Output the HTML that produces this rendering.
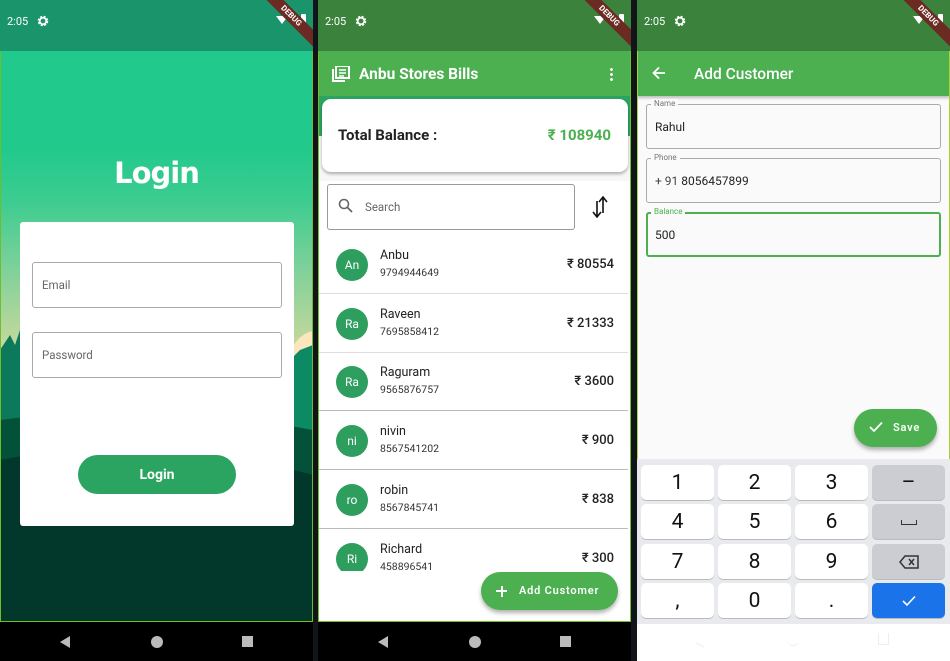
<!DOCTYPE html><html><head><meta charset="utf-8"><style>
*{margin:0;padding:0;box-sizing:border-box}
body{width:950px;height:661px;background:#111418;position:relative;overflow:hidden;font-family:"Roboto","Liberation Sans",sans-serif}
.p{position:absolute;top:0;height:661px;overflow:hidden}
.a{position:absolute}
.sb{position:absolute;left:0;top:0;width:100%;height:51px;color:#fff;font-size:11px}
.sb .t{position:absolute;left:7px;top:15px}
.gear{position:absolute;left:37px;top:15px}
.ribbon{position:absolute;right:-18px;top:10px;width:80px;height:12px;background:#6b2a22;transform:rotate(45deg);color:#fff;font-size:8px;text-align:center;line-height:12px;font-weight:bold}
.wifi{position:absolute;right:25px;top:16px;width:0;height:0;border-left:6px solid transparent;border-right:6px solid transparent;border-top:8px solid #fff}
.bat{position:absolute;right:7px;top:14px;width:5px;height:11px;background:#fff;border-radius:1px}
.nav{position:absolute;left:0;top:622px;width:100%;height:39px;background:#000}
.tri{position:absolute;top:14px;width:0;height:0;border-top:6px solid transparent;border-bottom:6px solid transparent;border-right:10px solid #bbb}
.cir{position:absolute;top:14px;width:12px;height:12px;border-radius:50%;background:#bbb}
.sq{position:absolute;top:14px;width:11px;height:11px;background:#bbb}
.row{position:absolute;left:0;width:310px;height:59px;border-bottom:1px solid #ddd}
.av{position:absolute;left:18px;top:14px;width:32px;height:32px;border-radius:50%;background:#2e9e5f;color:#fff;font-size:12px;text-align:center;line-height:32px}
.nm{position:absolute;left:62px;top:13px;font-size:12.5px;color:#222}
.ph{position:absolute;left:62px;top:31px;font-size:10.5px;color:#333}
.am{position:absolute;right:14px;top:22px;font-size:13px;color:#222;font-weight:500}
.k{position:absolute;width:73px;height:35px;background:#fff;border-radius:5px;box-shadow:0 1px 0 #bbb;font-size:21px;text-align:center;line-height:37px;color:#111}
.k.g{background:#cbcdd2}
</style></head><body>

<!-- PANEL 1 -->
<div class="p" style="left:0;width:313px;background:linear-gradient(#20c98c 0,#22c98c 150px,#3ccc90 200px,#7fd19a 270px,#b7d79b 330px,#d9dca0 380px)">
 <div class="sb" style="background:#1a956b"><span class="t">2:05</span><svg class="gear" width="12" height="12"><circle cx="6" cy="6" r="4" fill="none" stroke="#fff" stroke-width="2.5" stroke-dasharray="2 1.2"/><circle cx="6" cy="6" r="3.2" fill="none" stroke="#fff" stroke-width="1.6"/></svg><div class="wifi"></div><div class="bat"></div><div class="ribbon">DEBUG</div></div>
 <div class="a" style="left:290px;top:330px;width:60px;height:60px;border-radius:50%;background:#fbe6bd"></div>
 <svg class="a" style="left:0;top:330px" width="313" height="292"><path d="M0 20 L10 5 L15 15 L20 0 L28 25 L35 15 L45 40 L45 292 L0 292Z" fill="#0c7a5a"/><path d="M270 70 L280 50 L290 30 L300 20 L313 15 L313 292 L270 292Z" fill="#0c8a63"/><path d="M0 90 Q150 70 313 100 L313 292 L0 292Z" fill="#045139"/><path d="M0 130 Q150 100 313 145 L313 292 L0 292Z" fill="#02382b"/></svg>
 <div class="a" style="left:0;top:156px;width:313px;text-align:center;color:#fff;font-size:29px;font-weight:900;font-family:'DejaVu Sans',sans-serif;letter-spacing:-1px">Login</div>
 <div class="a" style="left:20px;top:222px;width:274px;height:304px;background:#fff;border-radius:3px"></div>
 <div class="a" style="left:32px;top:262px;width:250px;height:46px;border:1px solid #aaa;border-radius:3px;font-size:11.5px;color:#666;padding:15px 9px">Email</div>
 <div class="a" style="left:32px;top:332px;width:250px;height:46px;border:1px solid #aaa;border-radius:3px;font-size:11.5px;color:#666;padding:15px 9px">Password</div>
 <div class="a" style="left:78px;top:455px;width:158px;height:39px;border-radius:20px;background:#2ca461;color:#fff;font-size:14px;font-weight:bold;text-align:center;line-height:40px">Login</div>
 <div class="a" style="left:0;top:51px;width:313px;height:571px;border:1px solid #6fbf2a;border-top:none"></div>
 <div class="nav"><div class="tri" style="left:60px"></div><div class="cir" style="left:151px"></div><div class="sq" style="left:242px"></div></div>
</div>

<!-- PANEL 2 -->
<div class="p" style="left:318px;width:313px;background:#fff">
 <div class="sb" style="background:#3b823d"><span class="t">2:05</span><svg class="gear" width="12" height="12"><circle cx="6" cy="6" r="4" fill="none" stroke="#fff" stroke-width="2.5" stroke-dasharray="2 1.2"/><circle cx="6" cy="6" r="3.2" fill="none" stroke="#fff" stroke-width="1.6"/></svg><div class="wifi"></div><div class="bat"></div><div class="ribbon">DEBUG</div></div>
 <div class="a" style="left:0;top:51px;width:313px;height:45px;background:#4caf50"></div>
 <svg class="a" style="left:14px;top:66px" width="18" height="16"><rect x="4" y="0" width="13" height="12" fill="none" stroke="#fff" stroke-width="2"/><path d="M1 3 V15 H13" fill="none" stroke="#fff" stroke-width="2"/><path d="M7 4h7M7 7h7M7 10h5" stroke="#fff" stroke-width="1.5"/></svg>
 <div class="a" style="left:41px;top:65px;color:#fff;font-size:15.5px;font-weight:bold">Anbu Stores Bills</div>
 <div class="a" style="left:292px;top:67px;width:3px;height:14px;background:radial-gradient(circle,#fff 1.3px,transparent 1.6px) 0 0/3px 5px"></div>
 <div class="a" style="left:0;top:96px;width:313px;height:40px;background:#2ca461"></div>
 <div class="a" style="left:0;top:136px;width:313px;height:45px;background:#f7f7f7"></div>
 <div class="a" style="left:4px;top:99px;width:306px;height:73px;background:#fff;border-radius:9px;box-shadow:0 2px 3px rgba(0,0,0,.3)"></div>
 <div class="a" style="left:20px;top:126px;font-size:15px;font-weight:bold;color:#222">Total Balance :</div>
 <div class="a" style="right:20px;top:126px;font-size:15px;font-weight:bold;color:#4caf50">₹ 108940</div>
 <div class="a" style="left:9px;top:184px;width:248px;height:46px;border:1px solid #999;border-radius:3px"></div>
 <svg class="a" style="left:20px;top:198px" width="16" height="16"><circle cx="6" cy="6" r="4.5" fill="none" stroke="#666" stroke-width="1.6"/><path d="M9.5 9.5 L14 14" stroke="#666" stroke-width="1.8"/></svg>
 <div class="a" style="left:47px;top:200px;font-size:11.5px;color:#666">Search</div>
 <svg class="a" style="left:274px;top:196px" width="16" height="22"><path d="M5 21 V5 M1 16 L5 21 L9 16 M11 1 V17 M7 6 L11 1 L15 6" fill="none" stroke="#111" stroke-width="1.6"/></svg>
 <div class="row" style="top:235px"><div class="av">An</div><div class="nm">Anbu</div><div class="ph">9794944649</div><div class="am">₹ 80554</div></div>
 <div class="row" style="top:294px"><div class="av">Ra</div><div class="nm">Raveen</div><div class="ph">7695858412</div><div class="am">₹ 21333</div></div>
 <div class="row" style="top:352px;border-color:#bbb"><div class="av">Ra</div><div class="nm">Raguram</div><div class="ph">9565876757</div><div class="am">₹ 3600</div></div>
 <div class="row" style="top:411px;border-color:#bbb"><div class="av">ni</div><div class="nm">nivin</div><div class="ph">8567541202</div><div class="am">₹ 900</div></div>
 <div class="row" style="top:470px;border-color:#bbb"><div class="av">ro</div><div class="nm">robin</div><div class="ph">8567845741</div><div class="am">₹ 838</div></div>
 <div class="a" style="left:0;top:529px;width:310px;height:42px;overflow:hidden"><div class="av" style="top:14px">Ri</div><div class="nm" style="top:13px">Richard</div><div class="ph">458896541</div><div class="am">₹ 300</div></div>
 <div class="a" style="left:163px;top:572px;width:137px;height:38px;border-radius:19px;background:#4caf50;box-shadow:0 3px 4px rgba(0,0,0,.3);color:#fff;font-size:11px;font-weight:600;letter-spacing:.8px;line-height:38px;padding-left:38px">Add Customer</div>
 <div class="a" style="left:178px;top:590px;width:11px;height:2px;background:#fff"></div><div class="a" style="left:182.5px;top:585.5px;width:2px;height:11px;background:#fff"></div>
 <div class="a" style="left:0;top:51px;width:313px;height:571px;border:1px solid #6fbf2a;border-top:none"></div>
 <div class="nav"><div class="tri" style="left:60px"></div><div class="cir" style="left:151px"></div><div class="sq" style="left:242px"></div></div>
</div>

<!-- PANEL 3 -->
<div class="p" style="left:637px;width:313px;background:#fafafa">
 <div class="sb" style="background:#3b823d"><span class="t">2:05</span><svg class="gear" width="12" height="12"><circle cx="6" cy="6" r="4" fill="none" stroke="#fff" stroke-width="2.5" stroke-dasharray="2 1.2"/><circle cx="6" cy="6" r="3.2" fill="none" stroke="#fff" stroke-width="1.6"/></svg><div class="wifi"></div><div class="bat"></div><div class="ribbon">DEBUG</div></div>
 <div class="a" style="left:0;top:51px;width:313px;height:45px;background:#4caf50;box-shadow:0 2px 3px rgba(0,0,0,.25)"></div>
 <svg class="a" style="left:15px;top:66px" width="14" height="14"><path d="M13 7 H2 M7 1.5 L1.5 7 L7 12.5" fill="none" stroke="#fff" stroke-width="1.8"/></svg>
 <div class="a" style="left:57px;top:65px;color:#fff;font-size:15.5px;font-weight:500">Add Customer</div>
 <div class="a" style="left:9px;top:104px;width:295px;height:45px;border:1px solid #aaa;border-radius:3px"></div>
 <div class="a" style="left:14px;top:99px;font-size:8px;color:#777;background:#fafafa;padding:0 3px">Name</div>
 <div class="a" style="left:18px;top:120px;font-size:12px;color:#222">Rahul</div>
 <div class="a" style="left:9px;top:158px;width:295px;height:45px;border:1px solid #aaa;border-radius:3px"></div>
 <div class="a" style="left:14px;top:153px;font-size:8px;color:#777;background:#fafafa;padding:0 3px">Phone</div>
 <div class="a" style="left:18px;top:174px;font-size:12px;color:#444">+ 91 <span style="color:#222">8056457899</span></div>
 <div class="a" style="left:9px;top:212px;width:295px;height:45px;border:2px solid #4caf50;border-radius:3px"></div>
 <div class="a" style="left:14px;top:207px;font-size:8px;color:#4caf50;background:#fafafa;padding:0 3px">Balance</div>
 <div class="a" style="left:18px;top:228px;font-size:12px;color:#222">500</div>
 <div class="a" style="left:217px;top:409px;width:83px;height:38px;border-radius:19px;background:#4caf50;box-shadow:0 3px 4px rgba(0,0,0,.3);color:#fff;font-size:11px;font-weight:600;letter-spacing:.8px;line-height:38px;padding-left:39px">Save</div>
 <svg class="a" style="left:232px;top:421px" width="14" height="12"><path d="M1 6 L5 10 L13 1.5" fill="none" stroke="#fff" stroke-width="1.8"/></svg>
 <div class="a" style="left:0;top:459px;width:313px;height:165px;background:#e8eaed"></div>
 <div class="k" style="left:4px;top:465px">1</div><div class="k" style="left:81px;top:465px">2</div><div class="k" style="left:158px;top:465px">3</div><div class="k g" style="left:235px;top:465px">–</div>
 <div class="k" style="left:4px;top:504px">4</div><div class="k" style="left:81px;top:504px">5</div><div class="k" style="left:158px;top:504px">6</div><div class="k g" style="left:235px;top:504px"><span style="display:inline-block;width:16px;height:5px;border:1.5px solid #333;border-top:none;vertical-align:middle"></span></div>
 <div class="k" style="left:4px;top:544px">7</div><div class="k" style="left:81px;top:544px">8</div><div class="k" style="left:158px;top:544px">9</div><div class="k g" style="left:235px;top:544px"><svg width="20" height="14" style="vertical-align:middle"><path d="M6 1 H19 V13 H6 L1 7Z" fill="none" stroke="#333" stroke-width="1.5"/><path d="M10 4 L15 10 M15 4 L10 10" stroke="#333" stroke-width="1.5"/></svg></div>
 <div class="k" style="left:4px;top:583px">,</div><div class="k" style="left:81px;top:583px">0</div><div class="k" style="left:158px;top:583px">.</div><div class="k" style="left:235px;top:583px;background:#1a73e8"><svg width="14" height="12" style="vertical-align:middle"><path d="M1 6 L5 10 L13 1.5" fill="none" stroke="#fff" stroke-width="1.6"/></svg></div>
 <div class="a" style="left:0;top:624px;width:313px;height:37px;background:#fff"></div>
 <div class="a" style="left:60px;top:636px;width:10px;height:10px;border-bottom:1px solid #eee;transform:rotate(30deg)"></div>
 <div class="a" style="left:150px;top:636px;width:12px;height:10px;border-bottom:1px solid #eee;border-radius:0 0 6px 6px"></div>
 <div class="a" style="left:241px;top:633px;width:11px;height:12px;border:1px solid #eee;border-top:none"></div>
 <div class="a" style="left:0;top:51px;width:313px;height:408px;border-left:1px solid #a6d33a;border-right:1px solid #a6d33a"></div>
</div>
</body></html>
